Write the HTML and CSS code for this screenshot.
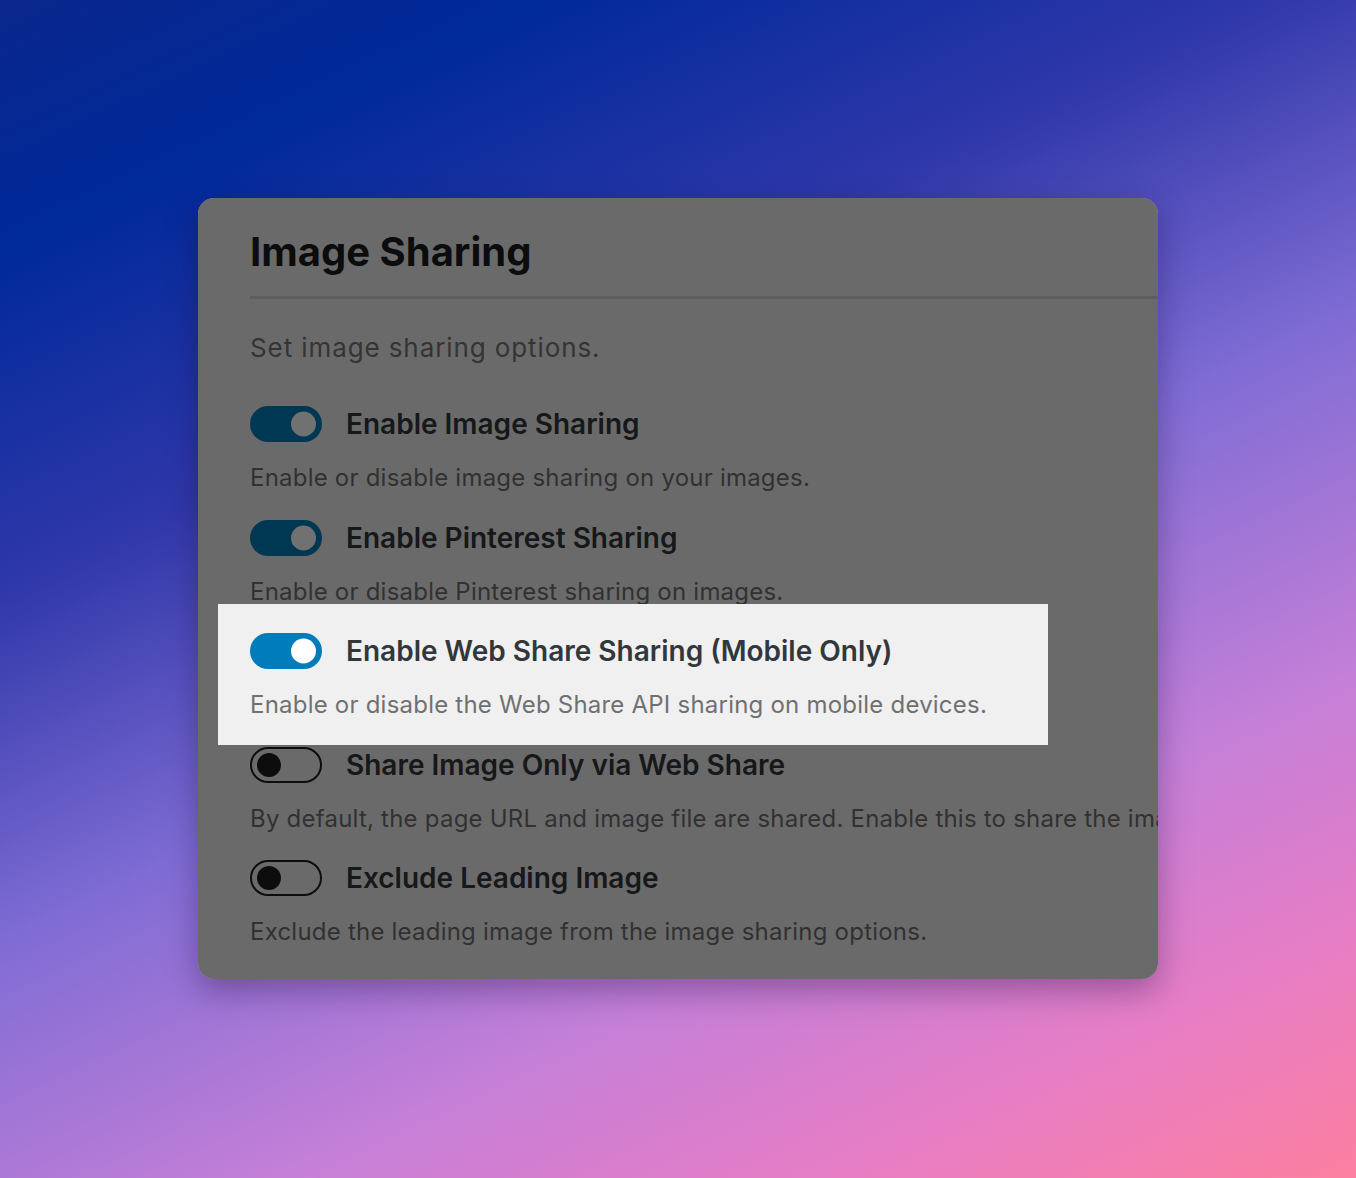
FILE: index.html
```html
<!DOCTYPE html>
<html lang="en">
<head>
<meta charset="utf-8">
<title>Image Sharing</title>
<link rel="stylesheet" href="styles.css">
</head>
<body>
<main class="stage">
  <section class="card">
    <div class="card-inner">
      <h1 class="title">Image Sharing</h1>
      <div class="separator"></div>
      <p class="intro">Set image sharing options.</p>
      <div class="settings">
        <div class="setting">
          <div class="setting-head">
            <span class="toggle toggle-on"><span class="knob"></span></span>
            <span class="label">Enable Image Sharing</span>
          </div>
          <p class="help">Enable or disable image sharing on your images.</p>
        </div>
        <div class="setting">
          <div class="setting-head">
            <span class="toggle toggle-on"><span class="knob"></span></span>
            <span class="label">Enable Pinterest Sharing</span>
          </div>
          <p class="help">Enable or disable Pinterest sharing on images.</p>
        </div>
        <div class="setting setting-spotlight">
          <div class="setting-head">
            <span class="toggle toggle-on"><span class="knob"></span></span>
            <span class="label">Enable Web Share Sharing (Mobile Only)</span>
          </div>
          <p class="help">Enable or disable the Web Share API sharing on mobile devices.</p>
        </div>
        <div class="setting">
          <div class="setting-head">
            <span class="toggle toggle-off"><span class="knob"></span></span>
            <span class="label">Share Image Only via Web Share</span>
          </div>
          <p class="help">By default, the page URL and image file are shared. Enable this to share the image only.</p>
        </div>
        <div class="setting">
          <div class="setting-head">
            <span class="toggle toggle-off"><span class="knob"></span></span>
            <span class="label">Exclude Leading Image</span>
          </div>
          <p class="help">Exclude the leading image from the image sharing options.</p>
        </div>
      </div>
    </div>
  </section>
</main>
</body>
</html>
```

FILE: styles.css
```css
* { box-sizing: border-box; }

html, body {
  margin: 0;
  padding: 0;
}

body {
  width: 1356px;
  height: 1178px;
  overflow: hidden;
  font-family: Inter, "Noto Sans", "Liberation Sans", sans-serif;
  background: linear-gradient(155deg, #0a278c 0%, #00299a 14%, #3038aa 33%, #7f6cd4 52%, #c47fd8 72%, #e67dc6 86%, #fc7fa0 100%);
}

.stage {
  padding: 198px 198px 0 198px;
}

.card {
  width: 960px;
  height: 781px;
  border-radius: 16px;
  background: #f0f0f0;
  overflow: hidden;
  box-shadow: 0 12px 32px rgba(30, 10, 60, 0.35);
}

.card-inner {
  padding: 26px 0 31px 52px;
}

.title {
  margin: 0;
  font-size: 40px;
  line-height: 56px;
  font-weight: 700;
  color: #1a1d20;
  letter-spacing: 0;
}

.separator {
  margin-top: 16px;
  height: 3px;
  background: #d5d5d6;
}

.intro {
  margin: 31px 0 0;
  font-size: 26px;
  line-height: 36px;
  color: #777;
  letter-spacing: 0.9px;
  white-space: nowrap;
}

.settings {
  margin-top: 40px;
  display: flex;
  flex-direction: column;
  gap: 24.5px;
}

.setting {
  white-space: nowrap;
}

.setting-head {
  display: flex;
  align-items: center;
  gap: 24px;
  height: 36px;
}

.label {
  font-size: 28px;
  line-height: 36px;
  font-weight: 600;
  color: #32373c;
}

.help {
  margin: 18px 0 0;
  padding-top: 1px;
  font-size: 24px;
  line-height: 34px;
  color: #707070;
  letter-spacing: 0.22px;
}

.toggle {
  position: relative;
  flex: none;
  width: 72px;
  height: 36px;
  border-radius: 18px;
}

.toggle .knob {
  position: absolute;
  top: 50%;
  border-radius: 50%;
  transform: translateY(-50%);
}

.toggle-on {
  background: #007cba;
}

.toggle-on .knob {
  right: 6px;
  width: 25px;
  height: 25px;
  background: #ffffff;
}

.toggle-off {
  border: 2px solid #1e1e1e;
  background: transparent;
}

.toggle-off .knob {
  left: 5px;
  width: 24px;
  height: 24px;
  background: #1e1e1e;
}

.setting-spotlight {
  position: relative;
  z-index: 1;
  width: 830px;
  margin: -29px 0 -23px -32px;
  padding: 29px 32px 23px;
  background: #f0f0f0;
  box-shadow: 0 0 0 3000px rgba(0, 0, 0, 0.555);
}
```
